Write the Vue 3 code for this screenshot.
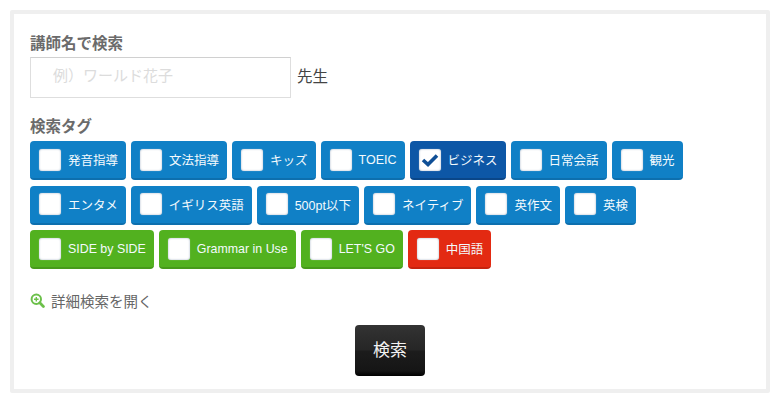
<script setup>
const rows = [
  [
    { t: '発音指導' }, { t: '文法指導' }, { t: 'キッズ' }, { t: 'TOEIC' },
    { t: 'ビジネス', on: true }, { t: '日常会話' }, { t: '観光' },
  ],
  [
    { t: 'エンタメ' }, { t: 'イギリス英語' }, { t: '500pt以下' }, { t: 'ネイティブ' },
    { t: '英作文' }, { t: '英検' },
  ],
  [
    { t: 'SIDE by SIDE', c: 'green' }, { t: 'Grammar in Use', c: 'green' },
    { t: "LET'S GO", c: 'green' }, { t: '中国語', c: 'red' },
  ],
]
</script>

<template>
  <main class="panel">
    <h2 class="label first">講師名で検索</h2>
    <div class="name-row">
      <input class="name" type="text" placeholder="例）ワールド花子" />
      <span class="suffix">先生</span>
    </div>
    <h2 class="label second">検索タグ</h2>
    <div class="tags">
      <div v-for="(row, i) in rows" :key="i" class="tag-row">
        <label v-for="tag in row" :key="tag.t" class="tag" :class="[tag.c, { on: tag.on }]">
          <span class="box">
            <svg v-if="tag.on" width="18" height="14" viewBox="0 0 18 14">
              <path d="M2 7 L7 11.5 L16 2.5" fill="none" stroke="#0f4f96" stroke-width="3.6" />
            </svg>
          </span>
          <span class="tag-text">{{ tag.t }}</span>
        </label>
      </div>
    </div>
    <a class="more">
      <svg width="15" height="15" viewBox="0 0 15 15">
        <circle cx="6.3" cy="6.3" r="4.7" fill="none" stroke="#6cc04a" stroke-width="2" />
        <path d="M9.8 9.8 L13.4 13.4" stroke="#6cc04a" stroke-width="2.8" stroke-linecap="round" />
        <path d="M6.3 4 V8.6 M4 6.3 H8.6" stroke="#6cc04a" stroke-width="1.4" />
      </svg>
      <span>詳細検索を開く</span>
    </a>
    <div class="submit-row">
      <button class="submit" type="button">検索</button>
    </div>
  </main>
</template>

<style>
html, body { margin: 0; background: #fff; }
</style>

<style scoped>
.panel {
  box-sizing: border-box;
  width: 760px;
  height: 383px;
  margin: 10px 0 0 10px;
  border: 4px solid #efefef;
  border-radius: 2px;
  padding: 0 16px;
  font-family: "Liberation Sans", "Noto Sans CJK JP", sans-serif;
  overflow: hidden;
}
.label {
  margin: 0;
  font-size: 15.5px;
  line-height: 20px;
  font-weight: 700;
  color: #6b6b6b;
}
.first { margin-top: 20px; }
.second { margin-top: 19px; }
.name-row {
  display: flex;
  align-items: center;
  margin-top: 3px;
  gap: 6px;
}
.name {
  box-sizing: border-box;
  width: 261px;
  height: 41px;
  border: 1px solid #dedede;
  border-top-color: #d0d0d0;
  padding: 0 22px 4px;
  font: 15px "Liberation Sans", "Noto Sans CJK JP", sans-serif;
  outline: none;
  background: #fff;
}
.name::placeholder { color: #dcdcdc; opacity: 1; }
.suffix { font-size: 15.5px; color: #444; padding-bottom: 6px; }
.tags {
  display: flex;
  flex-direction: column;
  gap: 5.5px;
  margin-top: 4px;
}
.tag-row { display: flex; gap: 5px; }
.tag {
  box-sizing: border-box;
  display: flex;
  align-items: center;
  height: 39px;
  padding: 0 8px 0 9px;
  gap: 7px;
  border-radius: 4px;
  background: #1080c6;
  border-bottom: 2px solid #0d6fae;
  color: #f4fafd;
  font-size: 12.5px;
  white-space: nowrap;
}
.tag.on { background: #0d57a6; border-bottom-color: #0a4688; }
.tag.green { background: #52b11f; border-bottom-color: #469a1a; font-size: 12.4px; }
.tag.red { background: #e32a12; border-bottom-color: #c6230e; }
.box {
  box-sizing: border-box;
  flex: none;
  display: flex;
  align-items: center;
  justify-content: center;
  width: 22px;
  height: 22px;
  border-radius: 3px;
  background: #fff;
  box-shadow: inset 0 0 2px rgba(60, 90, 130, 0.5), 0 0 1px rgba(255, 255, 255, 0.6);
}
.more {
  display: flex;
  align-items: center;
  gap: 6px;
  margin-top: 21px;
  height: 20px;
  font-size: 14.5px;
  color: #666;
}
.submit-row {
  display: flex;
  justify-content: center;
  margin-top: 15px;
}
.submit {
  width: 70px;
  height: 51px;
  border: 0;
  border-radius: 4px;
  background: linear-gradient(#333 0%, #262626 48%, #1c1c1c 52%, #151515 90%, #000 100%);
  color: #f2f2f2;
  font: 17px "Liberation Sans", "Noto Sans CJK JP", sans-serif;
  padding: 0 0 5px;
}
</style>
